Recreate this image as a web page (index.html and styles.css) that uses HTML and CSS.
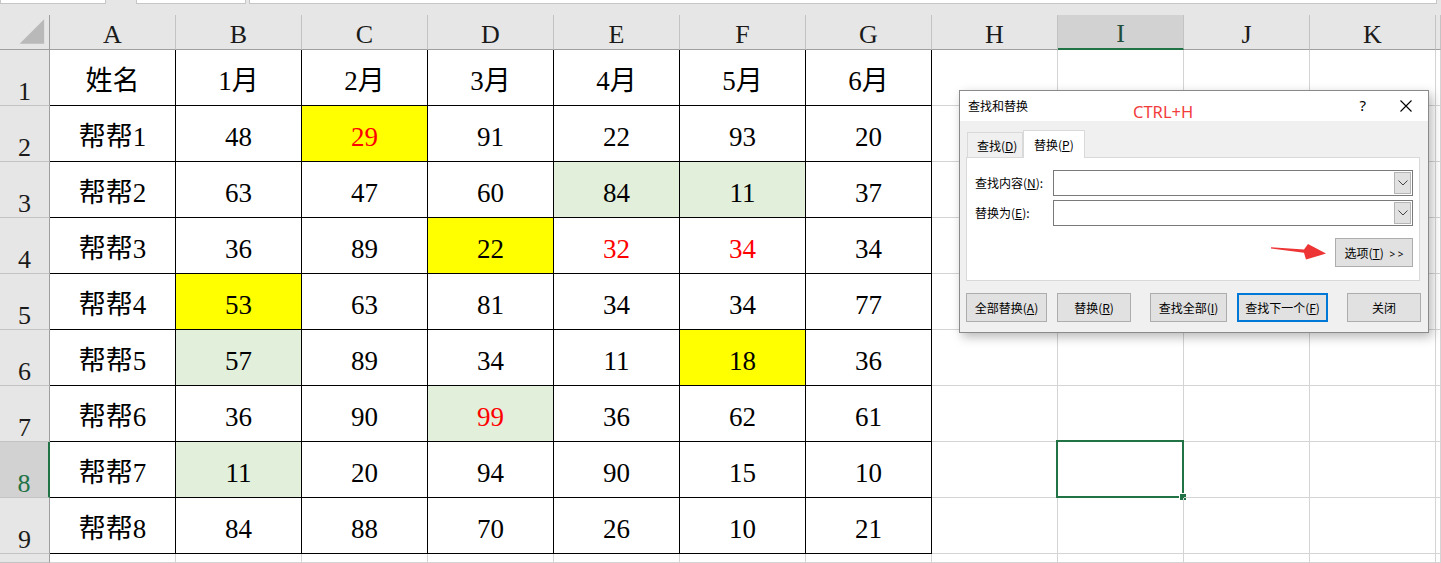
FILE: index.html
```html
<!DOCTYPE html>
<html lang="zh-CN">
<head>
<meta charset="utf-8">
<title>查找和替换</title>
<link rel="stylesheet" href="styles.css">
</head>
<body>
<div class="topbar">
  <div class="tb tb1"></div>
  <div class="tb tb2"></div>
  <div class="tb tb3"></div>
</div>
<div class="sheet">
  <div class="hd corner"><svg width="50" height="35" viewBox="0 0 50 35"><polygon points="20,30 45,30 45,5" fill="#b9b9b9"/></svg></div>
  <div class="hd">A</div><div class="hd">B</div><div class="hd">C</div><div class="hd">D</div><div class="hd">E</div><div class="hd">F</div><div class="hd">G</div><div class="hd">H</div><div class="hd hsel">I</div><div class="hd">J</div><div class="hd">K</div><div class="hd"></div>

  <div class="rh">1</div>
  <div class="t">姓名</div><div class="t">1月</div><div class="t">2月</div><div class="t">3月</div><div class="t">4月</div><div class="t">5月</div><div class="t">6月</div>
  <div class="c"></div><div class="c"></div><div class="c"></div><div class="c"></div><div class="c"></div>

  <div class="rh">2</div>
  <div class="t">帮帮1</div><div class="t">48</div><div class="t y r">29</div><div class="t">91</div><div class="t">22</div><div class="t">93</div><div class="t">20</div>
  <div class="c"></div><div class="c"></div><div class="c"></div><div class="c"></div><div class="c"></div>

  <div class="rh">3</div>
  <div class="t">帮帮2</div><div class="t">63</div><div class="t">47</div><div class="t">60</div><div class="t g">84</div><div class="t g">11</div><div class="t">37</div>
  <div class="c"></div><div class="c"></div><div class="c"></div><div class="c"></div><div class="c"></div>

  <div class="rh">4</div>
  <div class="t">帮帮3</div><div class="t">36</div><div class="t">89</div><div class="t y">22</div><div class="t r">32</div><div class="t r">34</div><div class="t">34</div>
  <div class="c"></div><div class="c"></div><div class="c"></div><div class="c"></div><div class="c"></div>

  <div class="rh">5</div>
  <div class="t">帮帮4</div><div class="t y">53</div><div class="t">63</div><div class="t">81</div><div class="t">34</div><div class="t">34</div><div class="t">77</div>
  <div class="c"></div><div class="c"></div><div class="c"></div><div class="c"></div><div class="c"></div>

  <div class="rh">6</div>
  <div class="t">帮帮5</div><div class="t g">57</div><div class="t">89</div><div class="t">34</div><div class="t">11</div><div class="t y">18</div><div class="t">36</div>
  <div class="c"></div><div class="c"></div><div class="c"></div><div class="c"></div><div class="c"></div>

  <div class="rh">7</div>
  <div class="t">帮帮6</div><div class="t">36</div><div class="t">90</div><div class="t g r">99</div><div class="t">36</div><div class="t">62</div><div class="t">61</div>
  <div class="c"></div><div class="c"></div><div class="c"></div><div class="c"></div><div class="c"></div>

  <div class="rh rsel">8</div>
  <div class="t">帮帮7</div><div class="t g">11</div><div class="t">20</div><div class="t">94</div><div class="t">90</div><div class="t">15</div><div class="t">10</div>
  <div class="c"></div><div class="c active"><span class="selbox"></span><span class="handle"></span></div><div class="c"></div><div class="c"></div><div class="c"></div>

  <div class="rh">9</div>
  <div class="t">帮帮8</div><div class="t">84</div><div class="t">88</div><div class="t">70</div><div class="t">26</div><div class="t">10</div><div class="t">21</div>
  <div class="c"></div><div class="c"></div><div class="c"></div><div class="c"></div><div class="c"></div>

  <div class="rh"></div>
  <div class="c"></div><div class="c"></div><div class="c"></div><div class="c"></div><div class="c"></div><div class="c"></div><div class="c"></div><div class="c"></div><div class="c"></div><div class="c"></div><div class="c"></div><div class="c"></div>
</div>

<div class="dialog">
  <div class="titlebar">
    <span class="title">查找和替换</span>
    <span class="ctrl">CTRL+H</span>
    <span class="help">?</span>
    <svg class="close" width="12" height="12" viewBox="0 0 12 12"><path d="M0.5 0.5 L11.5 11.5 M11.5 0.5 L0.5 11.5" stroke="#000" stroke-width="1.1" fill="none"/></svg>
  </div>
  <div class="dbody">
    <div class="tabs">
      <div class="tab">查找(<u>D</u>)</div>
      <div class="tab active">替换(<u>P</u>)</div>
    </div>
    <div class="panel">
      <div class="frow">
        <span class="lbl">查找内容(<u>N</u>):</span>
        <div class="combo"><span class="drop"><svg width="10" height="6" viewBox="0 0 10 6"><path d="M0.5 0.5 L5 5 L9.5 0.5" stroke="#444" stroke-width="1" fill="none"/></svg></span></div>
      </div>
      <div class="frow second">
        <span class="lbl">替换为(<u>E</u>):</span>
        <div class="combo c2"><span class="drop"><svg width="10" height="6" viewBox="0 0 10 6"><path d="M0.5 0.5 L5 5 L9.5 0.5" stroke="#444" stroke-width="1" fill="none"/></svg></span></div>
      </div>
      <div class="optrow">
        <button class="btn opt">选项(<u>T</u>) <span class="gt">&gt; &gt;</span></button>
      </div>
    </div>
    <div class="btnrow">
      <button class="btn b1">全部替换(<u>A</u>)</button>
      <button class="btn b2">替换(<u>R</u>)</button>
      <button class="btn b3">查找全部(<u>I</u>)</button>
      <button class="btn b4 primary">查找下一个(<u>F</u>)</button>
      <button class="btn b5">关闭</button>
    </div>
  </div>
  <svg class="arrow" width="60" height="22" viewBox="0 0 60 22"><polygon points="2,6.3 35,8.6 39,3 57,12.6 37,18.6 35,11.8 2,7.4" fill="#ee3535"/></svg>
</div>
</body>
</html>
```
FILE: styles.css
```css
html, body {
  margin: 0;
  padding: 0;
  background: #ffffff;
  overflow: hidden;
}
body {
  width: 1441px;
  height: 563px;
  position: relative;
  font-family: "Liberation Serif", "Noto Sans CJK SC", serif;
}
.topbar {
  height: 15px;
  background: #e6e6e6;
  display: flex;
  align-items: flex-start;
}
.tb {
  height: 4px;
  background: #ffffff;
  border: 1px solid #c6c6c6;
  border-top: none;
  box-sizing: border-box;
}
.tb1 { width: 106px; }
.tb2 { width: 110px; margin-left: 30px; }
.tb3 { width: 1188px; margin-left: 3px; }

.sheet {
  display: grid;
  grid-template-columns: 50px repeat(11, 126px) 1fr;
  grid-template-rows: 35px repeat(9, 56px) 1fr;
  height: 548px;
}
.sheet > div {
  box-sizing: border-box;
  border-right: 1px solid #d4d4d4;
  border-bottom: 1px solid #d4d4d4;
  position: relative;
}
.hd {
  background: #e6e6e6;
  border-right-color: #c3c3c3 !important;
  border-bottom-color: #9f9f9f !important;
  display: flex;
  justify-content: center;
  align-items: flex-end;
  padding-bottom: 1px;
  font-size: 26px;
  line-height: 26px;
  color: #1a1a1a;
}
.corner {
  border-right-color: #9f9f9f !important;
  padding: 0 !important;
}
.corner svg { display: block; }
.hsel {
  background: #d2d2d2;
  color: #1f4f3a;
  border-bottom: 2px solid #217346 !important;
}
.rh {
  background: #e6e6e6;
  border-right-color: #9f9f9f !important;
  border-bottom-color: #c3c3c3 !important;
  display: flex;
  justify-content: center;
  align-items: flex-end;
  font-size: 26px;
  line-height: 26px;
  color: #1a1a1a;
}
.rsel {
  background: #d2d2d2;
  color: #217346;
  border-right: 2px solid #217346 !important;
}
.t {
  border-right-color: #000 !important;
  border-bottom-color: #000 !important;
  display: flex;
  justify-content: center;
  align-items: flex-end;
  padding-bottom: 10px;
  font-size: 27px;
  line-height: 27px;
  color: #000;
}
.y { background: #ffff00; }
.g { background: #e2efda; }
.r { color: #ff0000; }
.active .selbox {
  position: absolute;
  top: -2px;
  left: -2px;
  right: -1px;
  bottom: -1px;
  border: 2px solid #217346;
}
.active .handle {
  position: absolute;
  right: -3px;
  bottom: -3px;
  width: 6px;
  height: 6px;
  background: #217346;
  border: 1px solid #fff;
  border-right: none;
  border-bottom: none;
}

/* dialog */
.dialog {
  position: absolute;
  left: 959px;
  top: 90px;
  width: 470px;
  height: 243px;
  box-sizing: border-box;
  border: 1px solid #8a8a8a;
  background: #f0f0f0;
  box-shadow: 3px 4px 10px rgba(0, 0, 0, 0.28);
  font-family: "Noto Sans CJK SC", "Noto Sans", sans-serif;
  font-size: 12px;
  color: #000;
}
.titlebar {
  height: 30px;
  background: #fff;
  display: flex;
  align-items: center;
  padding-left: 8px;
}
.title { line-height: 14px; }
.ctrl {
  margin-left: 105px;
  margin-top: 10px;
  font-family: "Noto Sans", sans-serif;
  font-size: 16.5px;
  color: #f23c3c;
}
.help {
  margin-left: auto;
  font-family: "Noto Sans", sans-serif;
  font-size: 15px;
  margin-right: 34px;
  margin-top: -3px;
}
.close {
  margin-right: 16px;
  margin-top: -1px;
}
.dbody {
  padding: 9px 7px 0 6px;
}
.tabs {
  display: flex;
  align-items: flex-end;
  height: 27px;
  padding-left: 1px;
}
.tab {
  box-sizing: border-box;
  height: 25px;
  width: 56px;
  border: 1px solid #d9d9d9;
  border-bottom: none;
  padding-left: 9px;
  line-height: 26px;
  background: #f0f0f0;
}
.tab.active {
  width: 62px;
  height: 28px;
  padding-left: 10px;
  background: #fff;
  margin-bottom: -1px;
  position: relative;
  z-index: 1;
  line-height: 28px;
}
.panel {
  box-sizing: border-box;
  width: 454px;
  height: 124px;
  border: 1px solid #d9d9d9;
  background: #fff;
  padding: 12px 6px 0 8px;
}
.frow {
  display: flex;
  align-items: center;
}
.frow.second { margin-top: 4px; }
.lbl {
  width: 78px;
  line-height: 14px;
}
.combo {
  box-sizing: border-box;
  width: 360px;
  height: 26px;
  border: 1px solid #7a7a7a;
  background: #fff;
  display: flex;
  justify-content: flex-end;
  padding: 1px;
}
.combo.c2 { height: 26px; }
.drop {
  box-sizing: border-box;
  width: 17px;
  background: #e1e1e1;
  border: 1px solid #b5b5b5;
  display: flex;
  align-items: center;
  justify-content: center;
}
.drop svg { display: block; }
.optrow {
  display: flex;
  justify-content: flex-end;
  margin-top: 12px;
}
.btn {
  box-sizing: border-box;
  height: 29px;
  border: 1px solid #adadad;
  background: #e1e1e1;
  font-family: "Noto Sans CJK SC", "Noto Sans", sans-serif;
  font-size: 12px;
  color: #000;
  padding: 0;
  margin: 0;
}
.btn.opt {
  width: 78px;
  height: 29px;
}
.gt {
  font-family: "Noto Sans", sans-serif;
  font-size: 10px;
  margin-left: 3px;
}
.btnrow {
  display: flex;
  margin-top: 12px;
}
.b1 { width: 81px; }
.b2 { width: 74px; margin-left: 10px; }
.b3 { width: 77px; margin-left: 19px; }
.b4 { width: 91px; margin-left: 10px; }
.b5 { width: 74px; margin-left: 19px; }
.primary {
  border: 2px solid #0078d7;
}
.arrow {
  position: absolute;
  left: 309px;
  top: 150px;
}
```
